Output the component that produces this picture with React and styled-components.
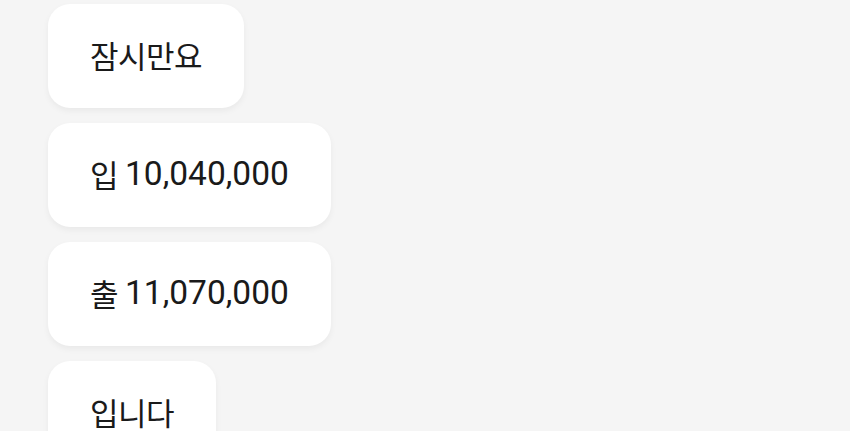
import React from "react";
import styled, { createGlobalStyle } from "styled-components";

const Global = createGlobalStyle`
  html, body { margin: 0; padding: 0; background: #f5f5f5; }
  body { font-family: Roboto, "Noto Sans CJK KR", sans-serif; }
`;

const Page = styled.div`
  width: 850px;
  height: 431px;
  overflow: hidden;
  background: #f5f5f5;
  display: flex;
  flex-direction: column;
  align-items: flex-start;
  gap: 15px;
  padding: 4px 0 0 48px;
  box-sizing: border-box;
`;

const Bubble = styled.div`
  flex: none;
  height: 104px;
  box-sizing: border-box;
  padding: 0 42px 4px 42px;
  display: flex;
  align-items: center;
  background: #ffffff;
  border-radius: 22px;
  box-shadow: 0 3px 6px rgba(0, 0, 0, 0.05);
  color: #1a1a1a;
  font-size: 32px;
  white-space: nowrap;
`;

const Ko = styled.span`
  font-family: "Noto Sans CJK KR", sans-serif;
  font-size: 31px;
  letter-spacing: -0.5px;
`;

const Num = styled.span`
  font-family: Roboto, sans-serif;
  font-size: 33.5px;
  margin-left: ${(p) => p.$gap || 0}px;
`;

export default function App() {
  return (
    <>
      <Global />
      <Page>
        <Bubble>
          <Ko>잠시만요</Ko>
        </Bubble>
        <Bubble>
          <Ko>입</Ko>
          <Num $gap={7}>10,040,000</Num>
        </Bubble>
        <Bubble>
          <Ko>출</Ko>
          <Num $gap={7}>11,070,000</Num>
        </Bubble>
        <Bubble>
          <Ko>입니다</Ko>
        </Bubble>
      </Page>
    </>
  );
}
